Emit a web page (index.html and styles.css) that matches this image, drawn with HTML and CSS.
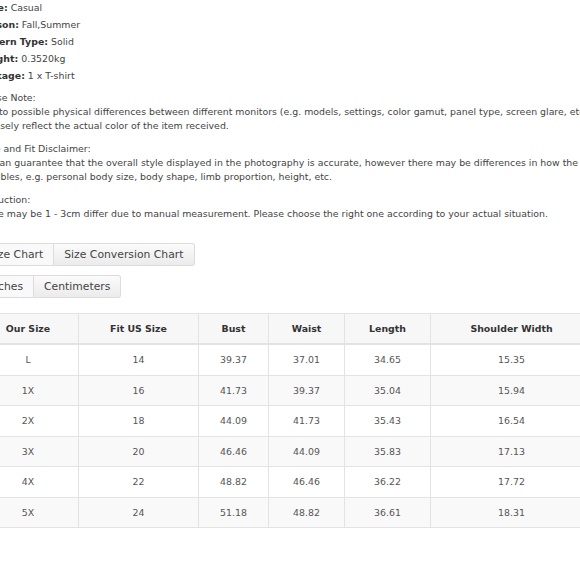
FILE: index.html
```html
<!DOCTYPE html>
<html>
<head>
<meta charset="utf-8">
<link rel="stylesheet" href="styles.css">
</head>
<body>
<div class="page">
  <div class="specs">
    <div class="spec"><b>Style:</b> Casual</div>
    <div class="spec"><b>Season:</b> Fall,Summer</div>
    <div class="spec"><b>Pattern Type:</b> Solid</div>
    <div class="spec"><b>Weight:</b> 0.3520kg</div>
    <div class="spec"><b>Package:</b> 1 x T-shirt</div>
  </div>

  <div class="notes">
    <div class="note">
      <div class="line">Please Note:</div>
      <div class="line">Due to possible physical differences between different monitors (e.g. models, settings, color gamut, panel type, screen glare, etc.), the product photography may not</div>
      <div class="line">precisely reflect the actual color of the item received.</div>
    </div>
    <div class="note">
      <div class="line">Style and Fit Disclaimer:</div>
      <div class="line">We can guarantee that the overall style displayed in the photography is accurate, however there may be differences in how the item fits due to</div>
      <div class="line">variables, e.g. personal body size, body shape, limb proportion, height, etc.</div>
    </div>
    <div class="note">
      <div class="line">Instruction:</div>
      <div class="line">There may be 1 - 3cm differ due to manual measurement. Please choose the right one according to your actual situation.</div>
    </div>
  </div>

  <div class="tabs">
    <div class="btn-group">
      <span class="btn active">Size Chart</span><span class="btn">Size Conversion Chart</span>
    </div>
    <div class="btn-group">
      <span class="btn active">Inches</span><span class="btn">Centimeters</span>
    </div>
  </div>

  <table class="size-table">
    <colgroup>
      <col class="c1"><col class="c2"><col class="c3"><col class="c4"><col class="c5"><col class="c6">
    </colgroup>
    <thead>
      <tr><th>Our Size</th><th>Fit US Size</th><th>Bust</th><th>Waist</th><th>Length</th><th>Shoulder Width</th></tr>
    </thead>
    <tbody>
      <tr><td>L</td><td>14</td><td>39.37</td><td>37.01</td><td>34.65</td><td>15.35</td></tr>
      <tr><td>1X</td><td>16</td><td>41.73</td><td>39.37</td><td>35.04</td><td>15.94</td></tr>
      <tr><td>2X</td><td>18</td><td>44.09</td><td>41.73</td><td>35.43</td><td>16.54</td></tr>
      <tr><td>3X</td><td>20</td><td>46.46</td><td>44.09</td><td>35.83</td><td>17.13</td></tr>
      <tr><td>4X</td><td>22</td><td>48.82</td><td>46.46</td><td>36.22</td><td>17.72</td></tr>
      <tr><td>5X</td><td>24</td><td>51.18</td><td>48.82</td><td>36.61</td><td>18.31</td></tr>
    </tbody>
  </table>
</div>
</body>
</html>
```

FILE: styles.css
```css
html, body {
  margin: 0;
  padding: 0;
  overflow: hidden;
  background: #fff;
}

.page {
  margin-left: -23px;
  margin-top: -1px;
  font-family: "DejaVu Sans", Verdana, sans-serif;
  font-size: 9.4px;
  color: #444;
}

.spec {
  line-height: 17px;
  white-space: nowrap;
}

.spec b {
  color: #333;
}

.notes {
  margin-top: 7px;
  display: flex;
  flex-direction: column;
  gap: 9px;
}

.line {
  line-height: 14px;
  white-space: nowrap;
}

.tabs {
  margin-top: 22px;
  display: flex;
  flex-direction: column;
  align-items: flex-start;
  gap: 9px;
}

.btn-group {
  display: flex;
}

.btn {
  font-size: 10.8px;
  line-height: 21px;
  padding: 0 10px;
  border: 1px solid #dcdcdc;
  background: linear-gradient(#fbfbfb, #ebebeb);
  color: #444;
  white-space: nowrap;
}

.btn + .btn {
  border-left: none;
}

.btn:first-child {
  border-radius: 3px 0 0 3px;
}

.btn:last-child {
  border-radius: 0 3px 3px 0;
}

.btn.active {
  background: #f9f9f9;
}

.size-table {
  margin-top: 15px;
  border-collapse: collapse;
  table-layout: fixed;
  width: 615px;
}

.c1 { width: 101px; }
.c2 { width: 120px; }
.c3 { width: 70px; }
.c4 { width: 76px; }
.c5 { width: 86px; }
.c6 { width: 162px; }

.size-table th,
.size-table td {
  border: 1px solid #e3e3e3;
  text-align: center;
  padding: 0;
}

.size-table th {
  height: 29px;
  background: #f7f7f7;
  color: #333;
  font-weight: bold;
  border-bottom: 2px solid #e3e3e3;
}

.size-table td {
  height: 29.5px;
  color: #555;
}

.size-table tbody tr:nth-child(even) td {
  background: #f9f9f9;
}
```
